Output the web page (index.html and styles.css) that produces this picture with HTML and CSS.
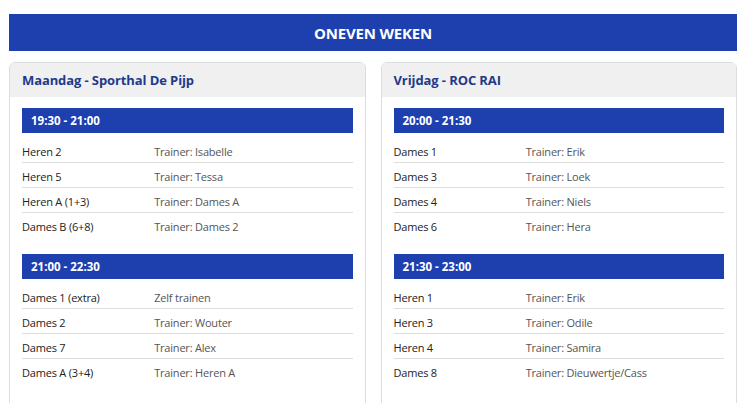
FILE: index.html
```html
<!DOCTYPE html>
<html lang="nl">
<head>
<meta charset="utf-8">
<link rel="stylesheet" href="styles.css">
</head>
<body>
<div class="banner">ONEVEN WEKEN</div>
<div class="cards">
  <section class="card">
    <div class="card-head">Maandag - Sporthal De Pijp</div>
    <div class="card-body">
      <div class="session">
        <div class="time">19:30 - 21:00</div>
        <div class="rows">
          <div class="row"><span class="team">Heren 2</span><span class="trainer">Trainer: Isabelle</span></div>
          <div class="row"><span class="team">Heren 5</span><span class="trainer">Trainer: Tessa</span></div>
          <div class="row"><span class="team">Heren A (1+3)</span><span class="trainer">Trainer: Dames A</span></div>
          <div class="row"><span class="team">Dames B (6+8)</span><span class="trainer">Trainer: Dames 2</span></div>
        </div>
      </div>
      <div class="session">
        <div class="time">21:00 - 22:30</div>
        <div class="rows">
          <div class="row"><span class="team">Dames 1 (extra)</span><span class="trainer">Zelf trainen</span></div>
          <div class="row"><span class="team">Dames 2</span><span class="trainer">Trainer: Wouter</span></div>
          <div class="row"><span class="team">Dames 7</span><span class="trainer">Trainer: Alex</span></div>
          <div class="row"><span class="team">Dames A (3+4)</span><span class="trainer">Trainer: Heren A</span></div>
        </div>
      </div>
    </div>
  </section>
  <section class="card">
    <div class="card-head">Vrijdag - ROC RAI</div>
    <div class="card-body">
      <div class="session">
        <div class="time">20:00 - 21:30</div>
        <div class="rows">
          <div class="row"><span class="team">Dames 1</span><span class="trainer">Trainer: Erik</span></div>
          <div class="row"><span class="team">Dames 3</span><span class="trainer">Trainer: Loek</span></div>
          <div class="row"><span class="team">Dames 4</span><span class="trainer">Trainer: Niels</span></div>
          <div class="row"><span class="team">Dames 6</span><span class="trainer">Trainer: Hera</span></div>
        </div>
      </div>
      <div class="session">
        <div class="time">21:30 - 23:00</div>
        <div class="rows">
          <div class="row"><span class="team">Heren 1</span><span class="trainer">Trainer: Erik</span></div>
          <div class="row"><span class="team">Heren 3</span><span class="trainer">Trainer: Odile</span></div>
          <div class="row"><span class="team">Heren 4</span><span class="trainer">Trainer: Samira</span></div>
          <div class="row"><span class="team">Dames 8</span><span class="trainer">Trainer: Dieuwertje/Cass</span></div>
        </div>
      </div>
    </div>
  </section>
</div>
</body>
</html>
```
FILE: styles.css
```css
* { box-sizing: border-box; }
html, body { margin: 0; background: #fff; }
body {
  padding: 14px 9px 0;
  font-family: "Open Sans", "Noto Sans", sans-serif;
  color: #222;
}
.banner {
  height: 37px;
  background: #1e40af;
  color: #fff;
  font-weight: 700;
  font-size: 15px;
  display: flex;
  align-items: center;
  justify-content: center;
  letter-spacing: -0.2px;
}
.cards {
  margin-top: 11px;
  display: grid;
  grid-template-columns: 1fr 1fr;
  gap: 15px;
}
.card {
  border: 1px solid #dddddd;
  border-radius: 6px;
  overflow: hidden;
  background: #fff;
}
.card-head {
  height: 34px;
  background: #f0f0f0;
  color: #1e3a8a;
  font-weight: 700;
  font-size: 13px;
  display: flex;
  align-items: center;
  padding: 0 12px;
  letter-spacing: -0.1px;
}
.card-body {
  padding: 11px 12px 32px;
}
.session + .session { margin-top: 16px; }
.time {
  height: 25px;
  background: #1e40af;
  color: #fff;
  font-weight: 700;
  font-size: 11.5px;
  display: flex;
  align-items: center;
  padding: 0 9px;
}
.rows { margin-top: 5px; }
.row {
  display: flex;
  height: 25px;
  align-items: center;
  padding-top: 2px;
  font-size: 11px;
  letter-spacing: -0.2px;
  border-bottom: 1px solid #dddddd;
}
.row:last-child { border-bottom: none; }
.team { width: 40%; color: #222; }
.trainer { width: 60%; color: #555; }
```
